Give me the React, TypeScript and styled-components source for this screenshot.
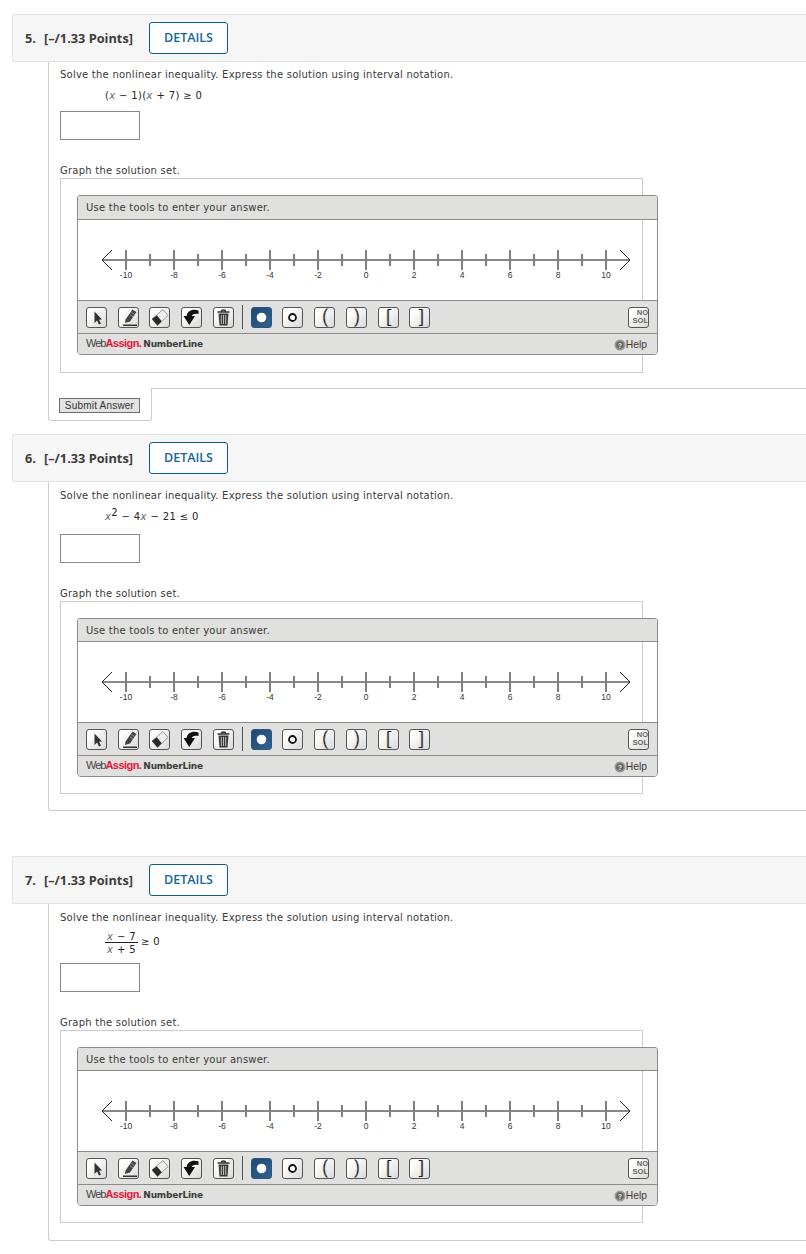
import React from "react";
import styled, { createGlobalStyle } from "styled-components";

const GlobalStyle = createGlobalStyle`
  html, body {
    margin: 0;
    padding: 0;
    background: #fff;
  }
`;

const Page = styled.div`
  overflow: hidden;
  min-height: 1254px;
  padding-top: 14px;
  box-sizing: border-box;
  font-family: "DejaVu Sans", Verdana, sans-serif;
  color: #333;
`;

const Section = styled.section<{ $gap: number }>`
  margin: ${(p) => p.$gap}px -10px 0 12px;
  &:first-child {
    margin-top: 0;
  }
`;

const QuestionHeader = styled.header`
  height: 48px;
  box-sizing: border-box;
  display: flex;
  align-items: center;
  padding-left: 12px;
  background: #f6f6f6;
  border: 1px solid #e2e2e2;
  border-radius: 2px;
`;

const QuestionNumber = styled.span`
  font: 700 12.75px/16px "Open Sans", sans-serif;
  color: #3d3d3d;
  width: 19px;
`;

const Points = styled.span`
  font: 700 12.75px/16px "Open Sans", sans-serif;
  color: #3d3d3d;
  width: 105px;
  white-space: nowrap;
`;

const DetailsButton = styled.button`
  width: 79px;
  height: 32px;
  padding: 0;
  background: #fff;
  border: 1px solid #0b5f8f;
  border-radius: 3px;
  font: 600 12.5px/16px "Open Sans", sans-serif;
  color: #14659b;
`;

const QuestionBody = styled.div<{ $closed?: boolean; $top: number; $pad: number }>`
  margin-left: 36px;
  padding: ${(p) => p.$top}px 0 ${(p) => p.$pad}px 11px;
  border-left: 1px solid #ccc;
  border-bottom: ${(p) => (p.$closed ? "1px solid #ccc" : "none")};
  border-bottom-left-radius: ${(p) => (p.$closed ? "3px" : "0")};
`;

const Prompt = styled.p`
  margin: 0;
  font-size: 10px;
  line-height: 14px;
  letter-spacing: 0.23px;
  color: #3a3a3a;
`;

const Equation = styled.div<{ $height: number }>`
  height: ${(p) => p.$height}px;
  margin: 6px 0 9px 45px;
  display: flex;
  align-items: flex-start;
  font-size: 10px;
  line-height: 16px;
  letter-spacing: 0.36px;
  color: #222;
  white-space: pre;
`;

const Variable = styled.i`
  font-style: italic;
  color: #666;
`;

const Power = styled.sup`
  font-size: 10px;
  line-height: 0;
`;

const Fraction = styled.span`
  display: inline-flex;
  flex-direction: column;
  align-items: center;
  width: 33px;
  margin-right: 3px;
`;

const Numerator = styled.span`
  height: 11px;
  line-height: 11px;
  border-bottom: 1px solid #222;
  width: 100%;
  text-align: center;
`;

const Denominator = styled.span`
  height: 13px;
  line-height: 14px;
`;

const Relation = styled.span`
  margin-top: 3px;
`;

const AnswerBox = styled.input`
  display: block;
  width: 80px;
  height: 29px;
  box-sizing: border-box;
  margin: 0;
  border: 1px solid #8a8a8a;
  background: #fff;
`;

const GraphLabel = styled(Prompt)`
  margin: 24px 0 0;
`;

const GraphPanel = styled.div<{ $bottom: number }>`
  width: 583px;
  box-sizing: border-box;
  padding: 16px 0 ${(p) => p.$bottom}px 16px;
  border: 1px solid #ccc;
`;

const Widget = styled.div`
  width: 581px;
  box-sizing: border-box;
  border: 1px solid #8b8b8b;
  border-radius: 3px 3px 4px 4px;
  overflow: hidden;
`;

const WidgetTitle = styled.div<{ $height: number }>`
  height: ${(p) => p.$height}px;
  box-sizing: content-box;
  display: flex;
  align-items: center;
  padding-left: 8px;
  background: #e0e0de;
  border-bottom: 1px solid #8b8b8b;
  font-size: 10px;
  letter-spacing: 0.23px;
  color: #3a3a3a;
`;

const Canvas = styled.div`
  height: 80px;
`;

const NumberLineSvg = styled.svg`
  display: block;
`;

const Toolbar = styled.div`
  height: 32px;
  display: flex;
  align-items: center;
  padding: 0 8px;
  background: #e0e0de;
  border-top: 1px solid #8b8b8b;
  border-bottom: 1px solid #8b8b8b;
`;

const ToolGroup = styled.div`
  display: flex;
  gap: 10.7px;
`;

const ToolDivider = styled.span`
  width: 1px;
  height: 24px;
  margin: 0 8px;
  background: #555;
`;

const ToolButton = styled.button<{ $active?: boolean }>`
  width: 21px;
  height: 21px;
  padding: 0;
  box-sizing: border-box;
  display: flex;
  align-items: center;
  justify-content: center;
  border: 1px solid ${(p) => (p.$active ? "#2c5680" : "#555")};
  border-radius: 3px;
  background: ${(p) =>
    p.$active
      ? "linear-gradient(135deg, #1d4874, #31628f)"
      : "linear-gradient(135deg, #fff 20%, #d9d9d9)"};
`;

const NoSolButton = styled(ToolButton)`
  margin-left: auto;
  flex-direction: column;
  align-items: flex-end;
  font: 700 7.5px/8px "Liberation Sans", Arial, sans-serif;
  color: #666;
`;

const WidgetFooter = styled.div`
  height: 20px;
  display: flex;
  align-items: center;
  justify-content: space-between;
  padding: 0 10px 0 8px;
  background: #e0e0de;
`;

const Brand = styled.div`
  display: flex;
  align-items: baseline;
  margin-bottom: 1px;
`;

const BrandWeb = styled.span`
  font: 400 11px/14px "Liberation Sans", Arial, sans-serif;
  letter-spacing: -1px;
  color: #444;
`;

const BrandAssign = styled.span`
  font: 700 11px/14px "Liberation Sans", Arial, sans-serif;
  letter-spacing: -0.55px;
  color: #e4173c;
`;

const BrandProduct = styled.span`
  font: 700 9px/14px "DejaVu Sans", Verdana, sans-serif;
  letter-spacing: -0.2px;
  color: #3a3a3a;
  margin-left: 2px;
`;

const HelpLink = styled.div`
  display: flex;
  align-items: center;
  margin-top: 1px;
  font: 400 10.3px/12px "Liberation Sans", Arial, sans-serif;
  color: #3a3a3a;
`;

const SubmitRow = styled.div`
  display: flex;
  margin-left: 36px;
`;

const SubmitTab = styled.div`
  width: 104px;
  height: 33px;
  box-sizing: border-box;
  padding: 10px 0 0 10px;
  border: 1px solid #ccc;
  border-top: none;
  border-radius: 0 0 3px 3px;
`;

const SubmitFill = styled.div`
  flex: 1;
  border-top: 1px solid #ccc;
`;

const SubmitButton = styled.button`
  display: block;
  width: 81px;
  height: 15px;
  padding: 0;
  background: #e2e2e2;
  border: 1px solid #6e6e6e;
  font: 400 10px/12px "Liberation Sans", Arial, sans-serif;
  letter-spacing: 0.2px;
  color: #333;
`;

const NumberLine = () => {
  const x0 = 48;
  const step = 24;
  const units = Array.from({ length: 21 }, (_, i) => i - 10);
  return (
    <NumberLineSvg width="579" height="80" viewBox="0 0 579 80">
      <line x1={x0 - 24} y1="40" x2={x0 + 504} y2="40" stroke="#888" strokeWidth="2" />
      {units.map((n) => {
        const x = x0 + (n + 10) * step;
        const major = n % 2 === 0;
        return (
          <g key={n}>
            <line x1={x} y1={major ? 30 : 34} x2={x} y2={major ? 50 : 46} stroke="#808080" strokeWidth="2" />
            {major && (
              <text x={x} y="58" textAnchor="middle" fontSize="8.5" fontFamily="'Liberation Sans', Arial, sans-serif" fill="#333">
                {n}
              </text>
            )}
          </g>
        );
      })}
      <polyline points="34,30 24,40 34,50" fill="none" stroke="#222" strokeWidth="1" />
      <polyline points="542,30 552,40 542,50" fill="none" stroke="#222" strokeWidth="1" />
    </NumberLineSvg>
  );
};

const Icon = ({ children }: { children: React.ReactNode }) => (
  <svg width="19" height="19" viewBox="0 0 19 19">
    {children}
  </svg>
);

const CursorIcon = () => (
  <Icon>
    <path d="M7.5 3.5 L7.5 15 L10 12.5 L12 16.5 L14 15.5 L12 11.8 L15 11.5 Z" fill="#333" />
  </Icon>
);

const MarkerIcon = () => (
  <Icon>
    <path d="M13.5 1.5 L17.5 4 L11 13.5 L7.5 14.5 L6 15 L6.5 11.5 Z" fill="#444" />
    <path d="M12.5 4.5 L15.5 6.5 M11 6.8 L14 8.8" stroke="#aaa" strokeWidth="0.8" />
    <path d="M4 17.3 H18" stroke="#333" strokeWidth="1.5" />
  </Icon>
);

const EraserIcon = () => (
  <Icon>
    <path d="M13 1.5 L18 7.5 L7.5 17.5 L2 11 Z" fill="#eee" stroke="#888" strokeWidth="0.8" />
    <path d="M6.8 7.2 L11.8 13.3 L7.5 17.5 L2 11 Z" fill="#2a2a2a" />
  </Icon>
);

const UndoIcon = () => (
  <Icon>
    <path d="M16.5 2.5 C10.5 0.5 5 3 4.5 8.5 L9.5 8.5 C10 6.2 12.5 5 16.5 6 Z" fill="#111" />
    <path d="M1.5 8 L13 8 L7.3 17 Z" fill="#111" />
  </Icon>
);

const TrashIcon = () => (
  <Icon>
    <path d="M3.5 4 H15.5 M7.5 3.5 C7.5 1.5 11.5 1.5 11.5 3.5" fill="none" stroke="#333" strokeWidth="1.4" />
    <path d="M4.5 5.5 H14.5 L13.5 17.5 H5.5 Z" fill="#3a3a3a" />
    <path d="M7.3 7 V16 M9.5 7 V16 M11.7 7 V16" stroke="#ccc" strokeWidth="0.9" />
  </Icon>
);

const FilledPoint = () => (
  <Icon>
    <circle cx="9.5" cy="9.5" r="4.8" fill="#fff" />
  </Icon>
);

const OpenPoint = () => (
  <Icon>
    <circle cx="9.5" cy="9.5" r="3.5" fill="#fff" stroke="#111" strokeWidth="1.8" />
  </Icon>
);

const Fringed = ({ d }: { d: string }) => (
  <Icon>
    <path d={d} transform="translate(-0.7 0)" fill="none" stroke="#e8862a" strokeWidth="0.9" />
    <path d={d} transform="translate(0.7 0)" fill="none" stroke="#1f7fd6" strokeWidth="0.9" />
    <path d={d} fill="none" stroke="#111" strokeWidth="0.9" />
  </Icon>
);

const HelpIcon = () => (
  <svg width="12" height="12" viewBox="0 0 12 12">
    <circle cx="6" cy="6" r="5.5" fill="#9a9a9a" />
    <circle cx="6" cy="6" r="3.8" fill="#666" />
    <text x="6" y="8.6" textAnchor="middle" fontSize="7" fontWeight="700" fontFamily="'Liberation Sans', Arial, sans-serif" fill="#eee">
      ?
    </text>
  </svg>
);

const GraphWidget = ({ titleHeight }: { titleHeight: number }) => (
  <Widget>
    <WidgetTitle $height={titleHeight}>Use the tools to enter your answer.</WidgetTitle>
    <Canvas>
      <NumberLine />
    </Canvas>
    <Toolbar>
      <ToolGroup>
        <ToolButton><CursorIcon /></ToolButton>
        <ToolButton><MarkerIcon /></ToolButton>
        <ToolButton><EraserIcon /></ToolButton>
        <ToolButton><UndoIcon /></ToolButton>
        <ToolButton><TrashIcon /></ToolButton>
      </ToolGroup>
      <ToolDivider />
      <ToolGroup>
        <ToolButton $active><FilledPoint /></ToolButton>
        <ToolButton><OpenPoint /></ToolButton>
        <ToolButton><Fringed d="M12 0.5 C8 5 8 14 12 18.5" /></ToolButton>
        <ToolButton><Fringed d="M8 0.5 C12 5 12 14 8 18.5" /></ToolButton>
        <ToolButton><Fringed d="M12 1.5 H9 V17.5 H12" /></ToolButton>
        <ToolButton><Fringed d="M9 1.5 H12 V17.5 H9" /></ToolButton>
      </ToolGroup>
      <NoSolButton>
        <span>NO</span>
        <span>SOL</span>
      </NoSolButton>
    </Toolbar>
    <WidgetFooter>
      <Brand>
        <BrandWeb>Web</BrandWeb>
        <BrandAssign>Assign.</BrandAssign>
        <BrandProduct>NumberLine</BrandProduct>
      </Brand>
      <HelpLink>
        <HelpIcon />
        Help
      </HelpLink>
    </WidgetFooter>
  </Widget>
);

type QuestionProps = {
  number: number;
  gap: number;
  equationHeight: number;
  equation: React.ReactNode;
  titleHeight?: number;
  bodyTop: number;
  bodyPad: number;
  hasSubmit?: boolean;
};

const Question = ({ number, gap, equationHeight, equation, titleHeight = 22, bodyTop, bodyPad, hasSubmit }: QuestionProps) => (
  <Section $gap={gap}>
    <QuestionHeader>
      <QuestionNumber>{number}.</QuestionNumber>
      <Points>[–/1.33 Points]</Points>
      <DetailsButton>DETAILS</DetailsButton>
    </QuestionHeader>
    <QuestionBody $closed={!hasSubmit} $top={bodyTop} $pad={bodyPad}>
      <Prompt>Solve the nonlinear inequality. Express the solution using interval notation.</Prompt>
      <Equation $height={equationHeight}>{equation}</Equation>
      <AnswerBox readOnly />
      <GraphLabel>Graph the solution set.</GraphLabel>
      <GraphPanel $bottom={titleHeight === 23 ? 17 : 16}>
        <GraphWidget titleHeight={titleHeight} />
      </GraphPanel>
    </QuestionBody>
    {hasSubmit && (
      <SubmitRow>
        <SubmitTab>
          <SubmitButton>Submit Answer</SubmitButton>
        </SubmitTab>
        <SubmitFill />
      </SubmitRow>
    )}
  </Section>
);

export default function App() {
  return (
    <>
      <GlobalStyle />
      <Page>
        <Question
          number={5}
          gap={0}
          equationHeight={14}
          titleHeight={23}
          bodyTop={6}
          bodyPad={15}
          hasSubmit
          equation={
            <span>
              (<Variable>x</Variable> − 1)(<Variable>x</Variable> + 7) ≥ 0
            </span>
          }
        />
        <Question
          number={6}
          gap={13}
          equationHeight={16}
          bodyTop={7}
          bodyPad={16}
          equation={
            <span>
              <Variable>x</Variable>
              <Power>2</Power> − 4<Variable>x</Variable> − 21 ≤ 0
            </span>
          }
        />
        <Question
          number={7}
          gap={45}
          equationHeight={23}
          bodyTop={7}
          bodyPad={17}
          equation={
            <>
              <Fraction>
                <Numerator>
                  <Variable>x</Variable> − 7
                </Numerator>
                <Denominator>
                  <Variable>x</Variable> + 5
                </Denominator>
              </Fraction>
              <Relation>≥ 0</Relation>
            </>
          }
        />
      </Page>
    </>
  );
}
